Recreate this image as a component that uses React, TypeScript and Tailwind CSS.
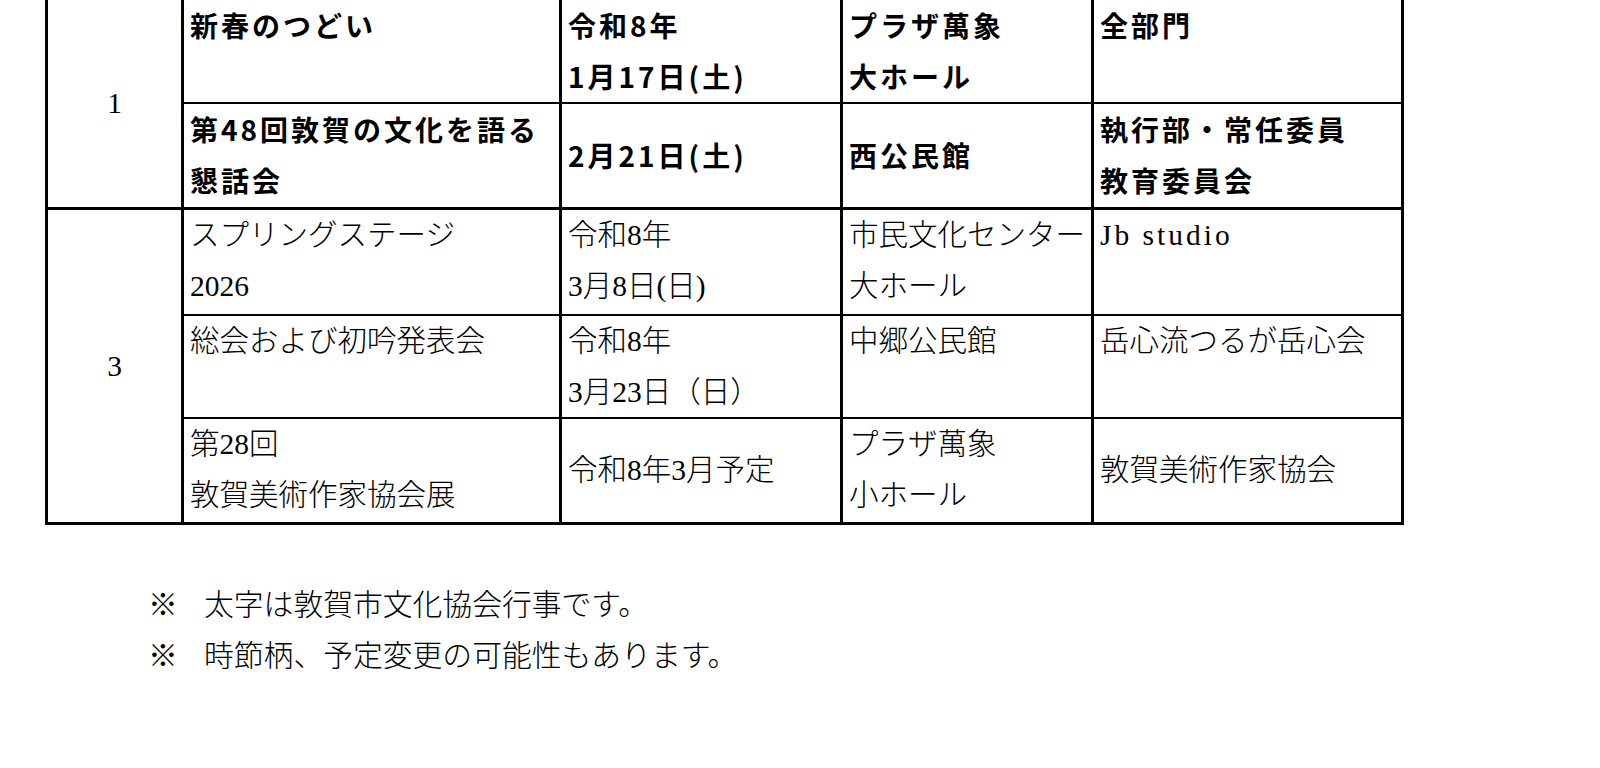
import React from 'react'

const gothic = "font-['Noto_Sans_CJK_JP',sans-serif] font-bold text-[28px] tracking-[3px] leading-[51px] text-black"
const mincho = "font-['Liberation_Serif','Noto_Sans_CJK_JP',serif] font-light text-[29.5px] leading-[51px] text-black"

type CellProps = {
  lines: string[]
  center?: boolean
  font: string
}

function Cell({ lines, center, font }: CellProps) {
  return (
    <div className={`bg-white pl-[6px] whitespace-nowrap overflow-hidden ${font} ${center ? 'flex flex-col justify-center' : ''}`}>
      {lines.map((l, i) => (
        <div key={i}>{l}</div>
      ))}
    </div>
  )
}

function NumCell({ n, span }: { n: string; span: string }) {
  return (
    <div className={`bg-white flex items-center justify-center ${span} ${mincho}`}>
      {n}
    </div>
  )
}

function Note({ text }: { text: string }) {
  return (
    <div className="flex">
      <span className="w-[56px] shrink-0">※</span>
      <span>{text}</span>
    </div>
  )
}

export default function App() {
  return (
    <div className="w-[1600px] h-[768px] bg-white overflow-hidden">
      <div className="ml-[45px] w-[1359px] bg-black px-[3px] pb-[3px] flex flex-col gap-[3px]">
        {/* 1月 */}
        <div className="grid grid-cols-[133px_375px_278px_248px_307px] grid-rows-[102px_103px] gap-x-[3px] gap-y-[2px]">
          <NumCell n="1" span="row-span-2" />
          <Cell font={gothic} lines={['新春のつどい']} />
          <Cell font={gothic} lines={['令和8年', '1月17日(土)']} />
          <Cell font={gothic} lines={['プラザ萬象', '大ホール']} />
          <Cell font={gothic} lines={['全部門']} />

          <Cell font={gothic} lines={['第48回敦賀の文化を語る', '懇話会']} />
          <Cell font={gothic} center lines={['2月21日(土)']} />
          <Cell font={gothic} center lines={['西公民館']} />
          <Cell font={gothic} lines={['執行部・常任委員', '教育委員会']} />
        </div>

        {/* 3月 */}
        <div className="grid grid-cols-[133px_375px_278px_248px_307px] grid-rows-[104px_101px_103px] gap-x-[3px] gap-y-[2px]">
          <NumCell n="3" span="row-span-3" />
          <Cell font={mincho} lines={['スプリングステージ', '2026']} />
          <Cell font={mincho} lines={['令和8年', '3月8日(日)']} />
          <Cell font={mincho} lines={['市民文化センター', '大ホール']} />
          <Cell font={`${mincho} tracking-[3px]`} lines={['Jb studio']} />

          <Cell font={mincho} lines={['総会および初吟発表会']} />
          <Cell font={mincho} lines={['令和8年', '3月23日（日）']} />
          <Cell font={mincho} lines={['中郷公民館']} />
          <Cell font={mincho} lines={['岳心流つるが岳心会']} />

          <Cell font={mincho} lines={['第28回', '敦賀美術作家協会展']} />
          <Cell font={mincho} center lines={['令和8年3月予定']} />
          <Cell font={mincho} lines={['プラザ萬象', '小ホール']} />
          <Cell font={mincho} center lines={['敦賀美術作家協会']} />
        </div>
      </div>

      <div className={`mt-[54px] pl-[148px] ${mincho} text-[29.8px]`}>
        <Note text="太字は敦賀市文化協会行事です。" />
        <Note text="時節柄、予定変更の可能性もあります。" />
      </div>
    </div>
  )
}
